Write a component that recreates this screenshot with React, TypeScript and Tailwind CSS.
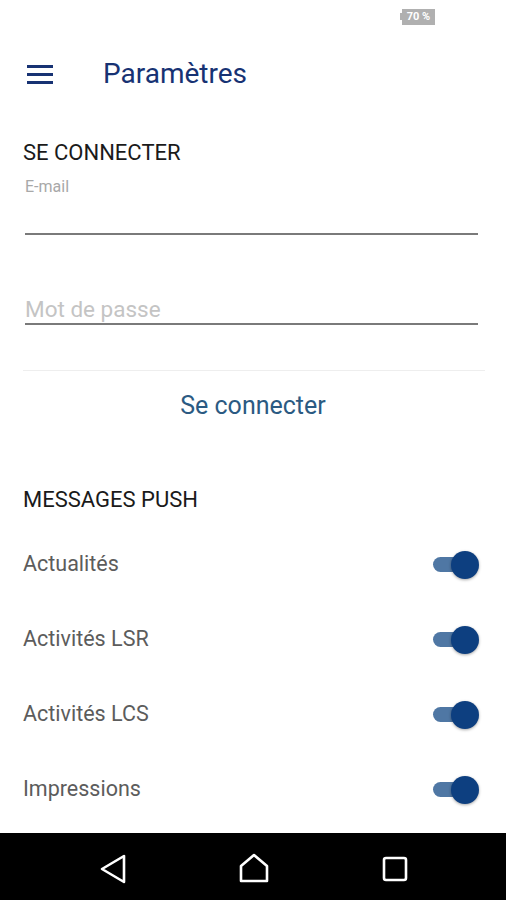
import React from "react";

const font = { fontFamily: "Roboto, 'Noto Sans', sans-serif" };

function Switch() {
  return (
    <div className="relative w-[46px] h-[30px] flex items-center">
      <div className="w-[37px] h-[15px] rounded-full bg-[#4f77a4]" />
      <div className="absolute right-0 top-[1px] w-[28px] h-[28px] rounded-full bg-[#0d3f80] shadow-[0_1px_3px_rgba(0,0,0,0.35)]" />
    </div>
  );
}

function Row({ label }: { label: string }) {
  return (
    <div className="h-[75px] flex items-center justify-between pl-[23px] pr-[27px]">
      <span className="text-[21.5px] text-[#5c5c5c]">{label}</span>
      <Switch />
    </div>
  );
}

export default function App() {
  return (
    <div className="w-[506px] h-[900px] bg-white flex flex-col" style={font}>
      {/* status bar */}
      <div className="h-[33px] flex items-center justify-end pr-[71px]">
        <div className="flex items-center">
          <div className="w-[2px] h-[7px] bg-[#b0b0b0]" />
          <div className="w-[33px] h-[16px] bg-[#b0b0b0] flex items-center justify-center text-[11px] font-bold text-white leading-none">
            70 %
          </div>
        </div>
      </div>
      {/* toolbar */}
      <div className="h-[82px] flex items-center">
        <div className="ml-[27px] w-[26px] flex flex-col gap-[5px]">
          <div className="h-[3px] bg-[#173273]" />
          <div className="h-[3px] bg-[#173273]" />
          <div className="h-[3px] bg-[#173273]" />
        </div>
        <span className="ml-[50px] text-[28px] text-[#173273]">Paramètres</span>
      </div>

      {/* login section */}
      <div className="mt-[25px] pl-[23px] h-[24px] flex items-center text-[22px] text-[#1a1a1a]">SE CONNECTER</div>
      <div className="mt-[15px] pl-[25px] h-[16px] flex items-center text-[16px] text-[#a8a8a8]">E-mail</div>
      <div className="ml-[25px] mr-[28px] h-[40px] border-b-2 border-[#7a7a7a]" />
      <div className="ml-[25px] mr-[28px] mt-[54px] h-[36px] border-b-2 border-[#7a7a7a] flex items-end pb-[1px] text-[22.5px] leading-[26px] text-[#c4c4c4]">
        Mot de passe
      </div>
      <div className="ml-[23px] mr-[21px] mt-[45px] h-[1px] bg-[#eeeeee]" />
      <div className="h-[70px] flex items-center justify-center text-[25px] text-[#2b5a82]">Se connecter</div>

      {/* push section */}
      <div className="mt-[46px] pl-[23px] h-[24px] flex items-center text-[22px] text-[#1a1a1a]">MESSAGES PUSH</div>
      <div className="mt-[16px] flex flex-col">
        <Row label="Actualités" />
        <Row label="Activités LSR" />
        <Row label="Activités LCS" />
        <Row label="Impressions" />
      </div>

      <div className="flex-1" />
      {/* nav bar */}
      <div className="h-[67px] bg-black flex items-center">
        <svg width="506" height="67" viewBox="0 0 506 67">
          <path d="M102 36 L124 23 L124 49 Z" fill="none" stroke="white" strokeWidth="2.6" strokeLinejoin="round" />
          <path d="M241 48 L241 33 L254 22 L267 33 L267 48 Z" fill="none" stroke="white" strokeWidth="2.6" strokeLinejoin="round" />
          <rect x="384" y="25" width="22" height="22" rx="2" fill="none" stroke="white" strokeWidth="2.6" />
        </svg>
      </div>
    </div>
  );
}
